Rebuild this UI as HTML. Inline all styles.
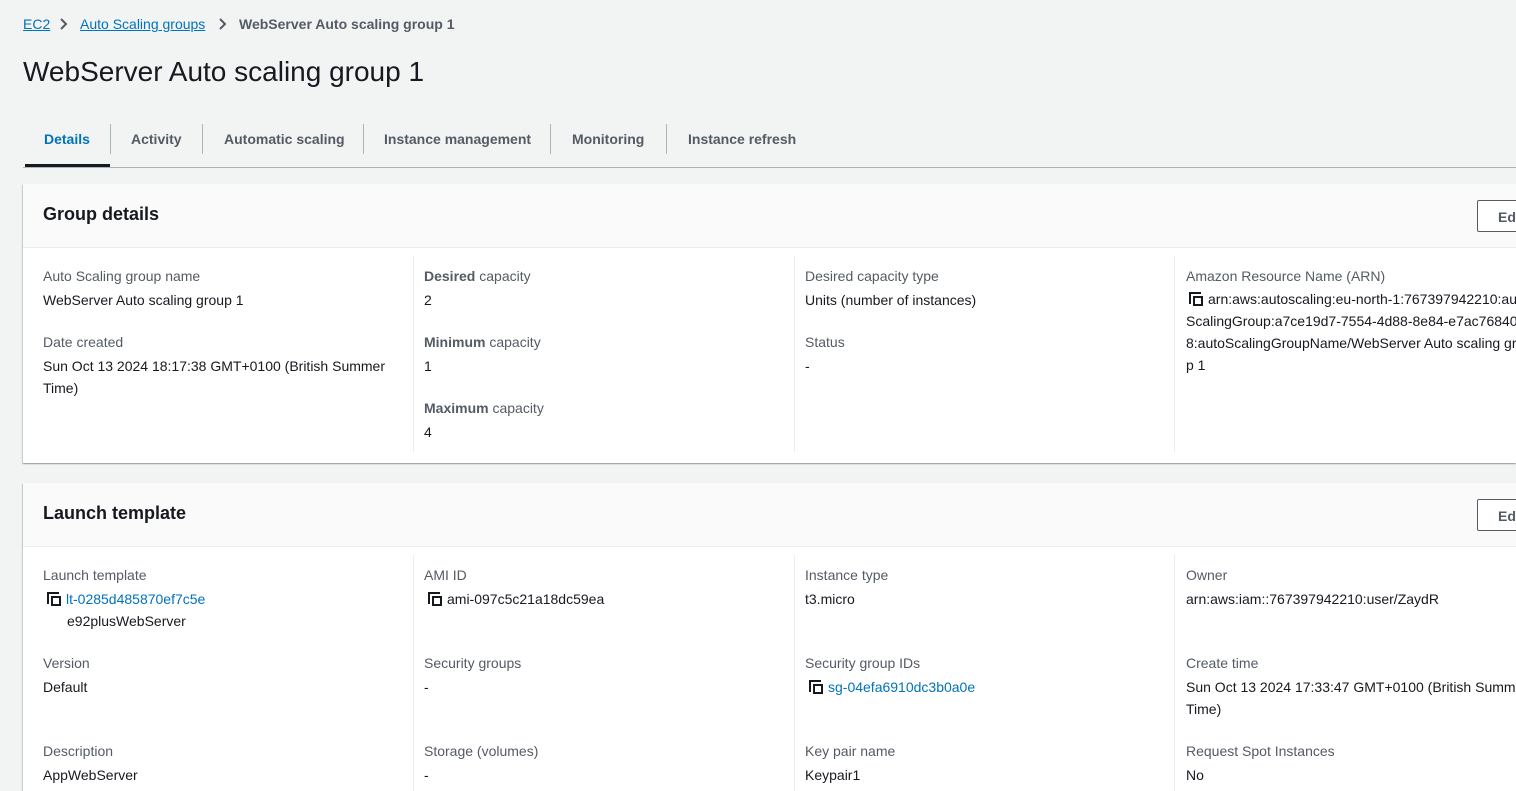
<!DOCTYPE html>
<html style="overflow:hidden;width:1516px;height:791px"><head><style>
*{margin:0;padding:0;box-sizing:border-box}
body{width:1516px;height:791px;overflow:hidden;background:#f2f3f3;font-family:"Liberation Sans",Arial,sans-serif;color:#16191f;font-size:14px;position:relative}
.a{position:absolute;white-space:nowrap}
a{color:#0073bb;text-decoration:underline}
.lbl{color:#545b64}
.lnk{color:#0073bb}
.tab{position:absolute;top:131px;font-weight:bold;color:#545b64;font-size:14px}
.sep{position:absolute;top:124px;width:1px;height:30px;background:#aab7b8}
.card{position:absolute;left:23px;width:1493px;background:#fff;overflow:hidden;box-shadow:0 1px 1px rgba(0,28,36,.3),-1px 1px 1px rgba(0,28,36,.15)}
.hd{height:64px;background:#fafafa;border-bottom:1px solid #eaeded;position:relative}
.hd h2{position:absolute;left:20px;top:20px;font-size:18px;font-weight:bold}
.btn{position:absolute;left:1454px;top:16px;width:60px;height:32px;border:1px solid #545b64;border-radius:2px;background:#fff;font-weight:bold;color:#545b64;padding:8px 20px}
.dv{position:absolute;width:1px;background:#eaeded}
.cp{display:inline-block;width:14px;height:14px;position:relative;vertical-align:-2px;margin-right:5px}
.cp:before{content:"";position:absolute;left:0;top:0;width:10px;height:10px;border-left:2px solid #16191f;border-top:2px solid #16191f}
.cp:after{content:"";position:absolute;left:4px;top:4px;width:10px;height:10px;border:2px solid #16191f;box-sizing:border-box}
</style></head><body>
<div class="a" style="left:23px;top:16px"><a>EC2</a></div>
<svg class="a" style="left:58px;top:17px" width="10" height="14"><path d="M3 2l5 5-5 5" fill="none" stroke="#545b64" stroke-width="2"/></svg>
<div class="a" style="left:80px;top:16px"><a>Auto Scaling groups</a></div>
<svg class="a" style="left:217px;top:17px" width="10" height="14"><path d="M3 2l5 5-5 5" fill="none" stroke="#545b64" stroke-width="2"/></svg>
<div class="a" style="left:239px;top:16px;font-weight:bold;color:#545b64">WebServer Auto scaling group 1</div>
<div class="a" style="left:23px;top:56px;font-size:28px">WebServer Auto scaling group 1</div>

<div class="tab" style="left:44px;color:#0073bb">Details</div>
<div class="sep" style="left:110px"></div>
<div class="tab" style="left:131px">Activity</div>
<div class="sep" style="left:202px"></div>
<div class="tab" style="left:224px">Automatic scaling</div>
<div class="sep" style="left:363px"></div>
<div class="tab" style="left:384px">Instance management</div>
<div class="sep" style="left:550px"></div>
<div class="tab" style="left:572px">Monitoring</div>
<div class="sep" style="left:666px"></div>
<div class="tab" style="left:688px">Instance refresh</div>
<div class="a" style="left:23px;top:167px;width:1493px;height:1px;background:#aab7b8"></div>
<div class="a" style="left:25px;top:164px;width:85px;height:3px;background:#16191f"></div>

<div class="card" style="top:184px;height:279px">
<div class="hd"><h2>Group details</h2><div class="btn">Edit</div></div>
<div class="dv" style="left:390px;top:72px;height:196px"></div>
<div class="dv" style="left:771px;top:72px;height:196px"></div>
<div class="dv" style="left:1151px;top:72px;height:196px"></div>
</div>
<div class="a lbl" style="left:43px;top:268px">Auto Scaling group name</div>
<div class="a" style="left:43px;top:292px">WebServer Auto scaling group 1</div>
<div class="a lbl" style="left:43px;top:334px">Date created</div>
<div class="a" style="left:43px;top:355px;line-height:22px">Sun Oct 13 2024 18:17:38 GMT+0100 (British Summer<br>Time)</div>
<div class="a lbl" style="left:424px;top:268px"><b>Desired</b> capacity</div>
<div class="a" style="left:424px;top:292px">2</div>
<div class="a lbl" style="left:424px;top:334px"><b>Minimum</b> capacity</div>
<div class="a" style="left:424px;top:358px">1</div>
<div class="a lbl" style="left:424px;top:400px"><b>Maximum</b> capacity</div>
<div class="a" style="left:424px;top:424px">4</div>
<div class="a lbl" style="left:805px;top:268px">Desired capacity type</div>
<div class="a" style="left:805px;top:292px">Units (number of instances)</div>
<div class="a lbl" style="left:805px;top:334px">Status</div>
<div class="a" style="left:805px;top:358px">-</div>
<div class="a lbl" style="left:1186px;top:268px">Amazon Resource Name (ARN)</div>
<div class="a" style="left:1186px;top:288px;line-height:22px"><span class="cp" style="margin-left:3px"></span>arn:aws:autoscaling:eu-north-1:767397942210:autoScalingGroup<br>ScalingGroup:a7ce19d7-7554-4d88-8e84-e7ac76840000<br>8:autoScalingGroupName/WebServer Auto scaling grou<br>p 1</div>

<div class="card" style="top:483px;height:320px">
<div class="hd"><h2>Launch template</h2><div class="btn">Edit</div></div>
<div class="dv" style="left:390px;top:72px;height:260px"></div>
<div class="dv" style="left:771px;top:72px;height:260px"></div>
<div class="dv" style="left:1151px;top:72px;height:260px"></div>
</div>
<div class="a lbl" style="left:43px;top:567px">Launch template</div>
<div class="a lnk" style="left:47px;top:591px"><span class="cp"></span>lt-0285d485870ef7c5e</div>
<div class="a" style="left:67px;top:613px">e92plusWebServer</div>
<div class="a lbl" style="left:43px;top:655px">Version</div>
<div class="a" style="left:43px;top:679px">Default</div>
<div class="a lbl" style="left:43px;top:743px">Description</div>
<div class="a" style="left:43px;top:767px">AppWebServer</div>
<div class="a lbl" style="left:424px;top:567px">AMI ID</div>
<div class="a" style="left:428px;top:591px"><span class="cp"></span>ami-097c5c21a18dc59ea</div>
<div class="a lbl" style="left:424px;top:655px">Security groups</div>
<div class="a" style="left:424px;top:679px">-</div>
<div class="a lbl" style="left:424px;top:743px">Storage (volumes)</div>
<div class="a" style="left:424px;top:767px">-</div>
<div class="a lbl" style="left:805px;top:567px">Instance type</div>
<div class="a" style="left:805px;top:591px">t3.micro</div>
<div class="a lbl" style="left:805px;top:655px">Security group IDs</div>
<div class="a lnk" style="left:809px;top:679px"><span class="cp"></span>sg-04efa6910dc3b0a0e</div>
<div class="a lbl" style="left:805px;top:743px">Key pair name</div>
<div class="a" style="left:805px;top:767px">Keypair1</div>
<div class="a lbl" style="left:1186px;top:567px">Owner</div>
<div class="a" style="left:1186px;top:591px">arn:aws:iam::767397942210:user/ZaydR</div>
<div class="a lbl" style="left:1186px;top:655px">Create time</div>
<div class="a" style="left:1186px;top:676px;line-height:22px">Sun Oct 13 2024 17:33:47 GMT+0100 (British Summer<br>Time)</div>
<div class="a lbl" style="left:1186px;top:743px">Request Spot Instances</div>
<div class="a" style="left:1186px;top:767px">No</div>
</body></html>
